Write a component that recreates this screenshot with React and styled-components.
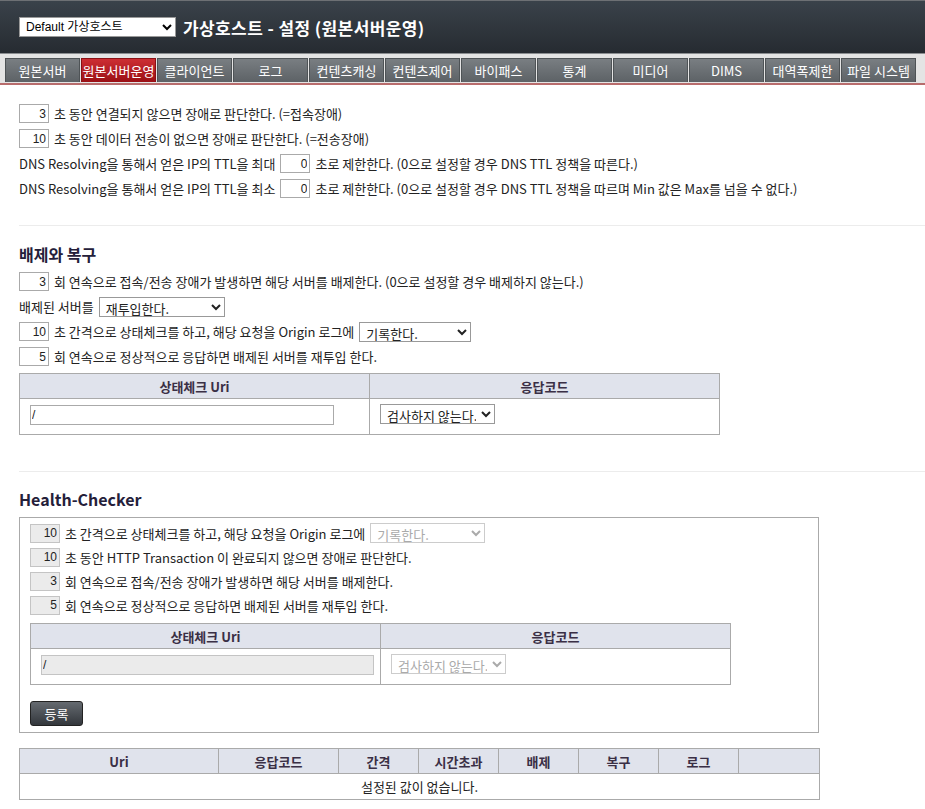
import React from "react";
import styled, { createGlobalStyle } from "styled-components";

const GlobalStyle = createGlobalStyle`
  body {
    margin: 0;
    background: #fff;
    color: #222;
    font-family: "Noto Sans CJK KR", "Liberation Sans", sans-serif;
    font-size: 13px;
  }
`;

const TABS = [
  "원본서버",
  "원본서버운영",
  "클라이언트",
  "로그",
  "컨텐츠캐싱",
  "컨텐츠제어",
  "바이패스",
  "통계",
  "미디어",
  "DIMS",
  "대역폭제한",
  "파일 시스템",
];

const Header = styled.div`
  height: 53px;
  border-top: 1px solid #6d7074;
  background: linear-gradient(#3a424a, #262b31);
  display: flex;
  align-items: center;
  padding-left: 19px;
  gap: 7px;
  box-sizing: border-box;
`;

const HostSelect = styled.select`
  width: 157px;
  height: 20px;
  font-family: "Liberation Sans", "Noto Sans CJK KR", sans-serif;
  font-size: 12px;
  border: 1px solid #999;
  background: #fff;
  color: #000;
  padding: 0 2px;
`;

const Title = styled.h1`
  margin: 0;
  color: #fff;
  font-size: 17px;
  font-weight: 700;
  letter-spacing: 0.4px;
`;

const TabBar = styled.div`
  background: #e4e4e4;
  border-top: 1px solid #8a8d90;
  border-bottom: 2px solid #b86c6c;
  padding: 4px 5px 1px;
  display: flex;
  gap: 1px;
`;

const Tab = styled.div`
  width: 75px;
  height: 24px;
  display: flex;
  align-items: center;
  justify-content: center;
  font-size: 13px;
  color: #fff;
  box-sizing: border-box;
  border: 1px solid ${(p) => (p.$active ? "#8a1014" : "#4e5356")};
  border-bottom: none;
  background: ${(p) =>
    p.$active
      ? "linear-gradient(#cd2e33, #9b1015)"
      : "linear-gradient(#797e82, #5d6266)"};
`;

const Content = styled.div`
  padding: 16px 0 20px 19px;
`;

const Row = styled.div`
  height: ${(p) => p.$h || 25}px;
  display: flex;
  align-items: center;
  gap: 5px;
  white-space: nowrap;
`;

const Num = styled.input`
  width: 30px;
  height: 19px;
  box-sizing: border-box;
  border: 1px solid ${(p) => (p.disabled ? "#c4c4c4" : "#aaa")};
  background: ${(p) => (p.disabled ? "#ebebeb" : "#fff")};
  text-align: right;
  font-family: "Liberation Sans", sans-serif;
  font-size: 12px;
  padding: 0 2px;
  color: #222;
`;

const Select = styled.select`
  width: ${(p) => p.$w}px;
  height: 20px;
  font-family: inherit;
  font-size: 13px;
  border: 1px solid ${(p) => (p.disabled ? "#ccc" : "#999")};
  background: #fff;
  color: ${(p) => (p.disabled ? "#aaa" : "#222")};
  padding: 0 2px;
  opacity: 1;
`;

const Separator = styled.hr`
  border: none;
  border-top: 1px solid #ececec;
  margin: ${(p) => p.$m || "24px 0 18px"};
`;

const Heading = styled.h2`
  margin: 0 0 ${(p) => p.$mb || 5}px;
  height: 20px;
  line-height: 20px;
  font-size: 16px;
  font-weight: 700;
  color: #24203a;
`;

const Table = styled.table`
  width: 701px;
  table-layout: fixed;
  border-collapse: collapse;
  margin-top: ${(p) => p.$mt || 4}px;
  th,
  td {
    border: 1px solid #aaa;
  }
  th {
    height: 24px;
    background: #e0e3ec;
    color: #3a2f45;
    font-weight: 700;
    font-size: 13px;
    padding: 0;
  }
  td {
    height: 30px;
    padding: 0 6px 5px 10px;
  }
`;

const UriInput = styled.input`
  width: ${(p) => p.$w}px;
  height: 20px;
  box-sizing: border-box;
  border: 1px solid ${(p) => (p.disabled ? "#c4c4c4" : "#aaa")};
  background: ${(p) => (p.disabled ? "#ebebeb" : "#fff")};
  font-family: "Liberation Sans", sans-serif;
  font-size: 12px;
  padding: 0 1px;
  color: #222;
`;

const Box = styled.div`
  width: 800px;
  box-sizing: border-box;
  border: 1px solid #aaa;
  padding: 3px 10px 6px;
`;

const Button = styled.button`
  margin-top: 16px;
  width: 53px;
  height: 25px;
  border: 1px solid #222;
  border-radius: 3px;
  background: linear-gradient(#656a70, #33373c);
  color: #fff;
  font-family: inherit;
  font-size: 13px;
`;

const ListTable = styled.table`
  width: 800px;
  table-layout: fixed;
  margin-top: 15px;
  border-collapse: collapse;
  th,
  td {
    border: 1px solid #aaa;
  }
  th {
    height: 24px;
    background: #e0e3ec;
    color: #3a2f45;
    font-weight: 700;
    font-size: 13px;
    padding: 0;
  }
  td {
    height: 23px;
    text-align: center;
    color: #222;
  }
`;

const COLS = [
  ["Uri", 199],
  ["응답코드", 120],
  ["간격", 80],
  ["시간초과", 80],
  ["배제", 80],
  ["복구", 80],
  ["로그", 80],
  ["", 81],
];

export default function App() {
  return (
    <>
      <GlobalStyle />
      <Header>
        <HostSelect defaultValue="d">
          <option value="d">Default 가상호스트</option>
        </HostSelect>
        <Title>가상호스트 - 설정 (원본서버운영)</Title>
      </Header>
      <TabBar>
        {TABS.map((t) => (
          <Tab key={t} $active={t === "원본서버운영"}>
            {t}
          </Tab>
        ))}
      </TabBar>

      <Content>
        <Row>
          <Num defaultValue="3" />
          초 동안 연결되지 않으면 장애로 판단한다. (=접속장애)
        </Row>
        <Row>
          <Num defaultValue="10" />
          초 동안 데이터 전송이 없으면 장애로 판단한다. (=전송장애)
        </Row>
        <Row>
          DNS Resolving을 통해서 얻은 IP의 TTL을 최대
          <Num defaultValue="0" />
          초로 제한한다. (0으로 설정할 경우 DNS TTL 정책을 따른다.)
        </Row>
        <Row>
          DNS Resolving을 통해서 얻은 IP의 TTL을 최소
          <Num defaultValue="0" />
          초로 제한한다. (0으로 설정할 경우 DNS TTL 정책을 따르며 Min 값은 Max를 넘을 수 없다.)
        </Row>

        <Separator />

        <Heading>배제와 복구</Heading>
        <Row>
          <Num defaultValue="3" />
          회 연속으로 접속/전송 장애가 발생하면 해당 서버를 배제한다. (0으로 설정할 경우 배제하지 않는다.)
        </Row>
        <Row>
          배제된 서버를
          <Select $w={126} defaultValue="a">
            <option value="a">재투입한다.</option>
          </Select>
        </Row>
        <Row>
          <Num defaultValue="10" />
          초 간격으로 상태체크를 하고, 해당 요청을 Origin 로그에
          <Select $w={112} defaultValue="a">
            <option value="a">기록한다.</option>
          </Select>
        </Row>
        <Row>
          <Num defaultValue="5" />
          회 연속으로 정상적으로 응답하면 배제된 서버를 재투입 한다.
        </Row>
        <Table>
          <colgroup>
            <col style={{ width: 350 }} />
            <col />
          </colgroup>
          <thead>
            <tr>
              <th>상태체크 Uri</th>
              <th>응답코드</th>
            </tr>
          </thead>
          <tbody>
            <tr>
              <td>
                <UriInput $w={304} defaultValue="/" />
              </td>
              <td>
                <Select $w={115} defaultValue="a">
                  <option value="a">검사하지 않는다.</option>
                </Select>
              </td>
            </tr>
          </tbody>
        </Table>

        <Separator $m="36px 0 17px" />

        <Heading $mb={8}>Health-Checker</Heading>
        <Box>
          <Row $h={24}>
            <Num disabled defaultValue="10" />
            초 간격으로 상태체크를 하고, 해당 요청을 Origin 로그에
            <Select disabled $w={115} defaultValue="a">
              <option value="a">기록한다.</option>
            </Select>
          </Row>
          <Row $h={24}>
            <Num disabled defaultValue="10" />
            초 동안 HTTP Transaction 이 완료되지 않으면 장애로 판단한다.
          </Row>
          <Row $h={24}>
            <Num disabled defaultValue="3" />
            회 연속으로 접속/전송 장애가 발생하면 해당 서버를 배제한다.
          </Row>
          <Row $h={24}>
            <Num disabled defaultValue="5" />
            회 연속으로 정상적으로 응답하면 배제된 서버를 재투입 한다.
          </Row>
          <Table $mt={6}>
            <colgroup>
              <col style={{ width: 350 }} />
              <col />
            </colgroup>
            <thead>
              <tr>
                <th>상태체크 Uri</th>
                <th>응답코드</th>
              </tr>
            </thead>
            <tbody>
              <tr>
                <td>
                  <UriInput disabled $w={333} defaultValue="/" />
                </td>
                <td>
                  <Select disabled $w={115} defaultValue="a">
                    <option value="a">검사하지 않는다.</option>
                  </Select>
                </td>
              </tr>
            </tbody>
          </Table>
          <Button>등록</Button>
        </Box>

        <ListTable>
          <colgroup>
            {COLS.map(([, w], i) => (
              <col key={i} style={{ width: w }} />
            ))}
          </colgroup>
          <thead>
            <tr>
              {COLS.map(([c], i) => (
                <th key={i}>{c}</th>
              ))}
            </tr>
          </thead>
          <tbody>
            <tr>
              <td colSpan={8}>설정된 값이 없습니다.</td>
            </tr>
          </tbody>
        </ListTable>
      </Content>
    </>
  );
}
